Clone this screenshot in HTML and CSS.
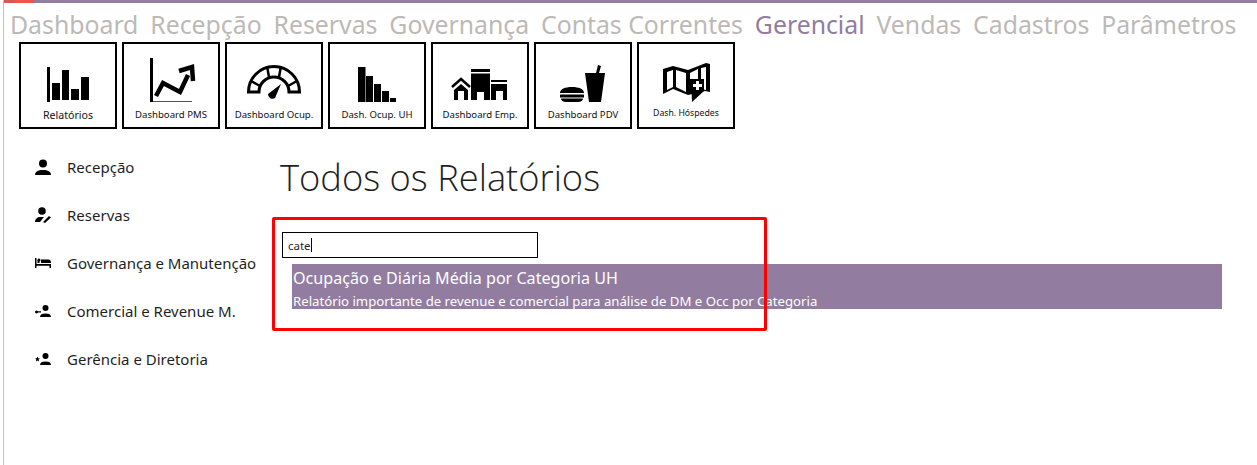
FILE: index.html
```html
<!DOCTYPE html>
<html lang="pt-BR">
<head>
<meta charset="utf-8">
<title>Todos os Relatórios</title>
<link rel="stylesheet" href="styles.css">
</head>
<body>
<div class="app">
  <div class="topbar"><div class="topbar-red"></div></div>
  <nav class="menu">
    <a>Dashboard</a><a>Recepção</a><a>Reservas</a><a>Governança</a><a>Contas Correntes</a><a class="active">Gerencial</a><a>Vendas</a><a>Cadastros</a><a>Parâmetros</a>
  </nav>
  <div class="tiles">
    <div class="tile">
      <svg class="tile-icon" viewBox="0 0 94 62"><path d="M26 23h3v35h-3zM31 39h8v17h-8zM41 26h7v30h-7zM50 45h8v11h-8zM60 33h8v23h-8z"/></svg>
      <span class="tile-label large">Relatórios</span>
    </div>
    <div class="tile">
      <svg class="tile-icon" viewBox="0 0 94 62"><path d="M26 14h3v44h-3z"/><path d="M29 57h39v1H29z" fill="#555"/><path d="M32 52l7-13 17 9 8-17" fill="none" stroke="#000" stroke-width="4.500"/><path d="M55 27l13-4 1 14" fill="none" stroke="#000" stroke-width="4.500"/></svg>
      <span class="tile-label">Dashboard PMS</span>
    </div>
    <div class="tile">
      <svg class="tile-icon" viewBox="0 0 94 62"><path d="M21.500 48A25.500 25.500 0 0 1 72.500 48H62A15 15 0 0 0 32 48Z" fill="none" stroke="#000" stroke-width="3"/><path d="M42 33l-2-11M52 33l2-11M33 42l-9-5M61 42l9-5" stroke="#000" stroke-width="2.500"/><path d="M54 40L48 54a4.500 4.500 0 0 1-7-4Z"/></svg>
      <span class="tile-label">Dashboard Ocup.</span>
    </div>
    <div class="tile">
      <svg class="tile-icon" viewBox="0 0 94 62"><path d="M28 23h7.500v35H28zM36 32h7v26h-7zM44 40h7v18h-7zM52 47h7v11h-7zM60 54h6v4h-6z"/></svg>
      <span class="tile-label">Dash. Ocup. UH</span>
    </div>
    <div class="tile">
      <svg class="tile-icon" viewBox="0 0 94 62"><path d="M19 43l9-8 9 8" fill="none" stroke="#000" stroke-width="2.500"/><path d="M21 56V46l7-6 7 6v10h-4v-9h-6v9zM38 25h19v3H38zM38 29.500h19V56h-6V48h-7v8h-6zM58 36h16v2H58zM58 40h16v16h-4v-9h-7v9h-5z"/></svg>
      <span class="tile-label">Dashboard Emp.</span>
    </div>
    <div class="tile">
      <svg class="tile-icon" viewBox="0 0 94 62"><path d="M24 49c0-4 5-6 12-6s12 2 12 6zM24 50.500h24v3H24zM25 54.500h22c0 2-2 3.500-5 3.500H30c-3 0-5-1.500-5-3.500zM49 29h11l2-8 3 1-2 7h6l-4 29H53z"/></svg>
      <span class="tile-label">Dashboard PDV</span>
    </div>
    <div class="tile">
      <svg class="tile-icon" viewBox="0 0 94 62"><path d="M24 25l10-3 15 4 18-7 4 1v28l-5-1-17 4-15-6-10 5z"/><path d="M28 28l6-2v17l-6 3zM37 26l10 3v19l-10-5zM51 29l8-4v10h-8zM62 24l5-1v23l-5-1z" fill="#fff"/><path d="M52 35h13v12L53 58z"/><path d="M57 37h3v3h3v3h-3v3h-3v-3h-3v-3h3z" fill="#fff"/></svg>
      <span class="tile-label small">Dash. Hóspedes</span>
    </div>
  </div>
  <div class="main">
    <aside class="side">
      <div class="side-item">
        <svg class="side-icon" viewBox="0 0 16 16"><circle cx="8" cy="4.500" r="4"/><path d="M0 16c0-3.500 3-5 8-5s8 1.500 8 5z"/></svg>
        <span>Recepção</span>
      </div>
      <div class="side-item">
        <svg class="side-icon" viewBox="0 0 16 16"><circle cx="7" cy="4" r="3.800"/><path d="M0 15c0-3 2-5 6-5h3l-4 5zM8 15l6-6 2 1.500-6 5.500z"/></svg>
        <span>Reservas</span>
      </div>
      <div class="side-item">
        <svg class="side-icon" viewBox="0 0 16 16"><path d="M0 3h1.500v6H16v4h-1.500v-2.200h-13V13H0zM2.500 5h2v3h-2z"/><circle cx="4" cy="5" r="1.500"/><path d="M6 4.500h7.500c1.500 0 2.500 1 2.500 3.500H6z"/></svg>
        <span>Governança e Manutenção</span>
      </div>
      <div class="side-item">
        <svg class="side-icon" viewBox="0 0 16 16"><circle cx="10.500" cy="5" r="3"/><path d="M5 14c0-2.500 2-3.500 5.500-3.500S16 11.500 16 14z"/><path d="M1.500 7.500a1.500 1.500 0 1 0 .1 0zM3 8.300h3v1.200H3z"/></svg>
        <span>Comercial e Revenue M.</span>
      </div>
      <div class="side-item">
        <svg class="side-icon" viewBox="0 0 16 16"><circle cx="10.500" cy="5" r="3"/><path d="M5 14c0-2.500 2-3.500 5.500-3.500S16 11.500 16 14z"/><path d="M2.500 5.500l.8 1.700 1.700.2-1.300 1.200.4 1.800-1.600-.9-1.600.9.400-1.800L0 7.400l1.700-.2z"/></svg>
        <span>Gerência e Diretoria</span>
      </div>
    </aside>
    <section class="content">
      <h1 class="title">Todos os Relatórios</h1>
      <div class="search"><span>cate</span><i class="caret"></i></div>
      <div class="result">
        <div class="result-title">Ocupação e Diária Média por Categoria UH</div>
        <div class="result-desc">Relatório importante de revenue e comercial para análise de DM e Occ por Categoria</div>
      </div>
    </section>
  </div>
  <div class="highlight"></div>
</div>
</body>
</html>
```

FILE: styles.css
```css
* { box-sizing: border-box; }
html, body { margin: 0; height: 100%; background: #fff; }
body {
  font-family: "Noto Sans", "Open Sans", "Liberation Sans", sans-serif;
  color: #1f1f1f;
  overflow: hidden;
}
.app {
  position: relative;
  height: 465px;
  margin-left: 3px;
  border-left: 1px solid #c4bfca;
}
.topbar {
  height: 3px;
  background: #927da0;
}
.topbar-red {
  width: 30px;
  height: 3px;
  background: linear-gradient(to right, #d9574f 0 11px, #f55050 11px);
}
.menu {
  display: flex;
  gap: 11.900px;
  height: 39px;
  padding-left: 6px;
  font-size: 24.800px;
  line-height: 43px;
  color: #bdb9b7;
  white-space: nowrap;
}
.menu .active { color: #927da0; }
.tiles {
  display: flex;
  gap: 5px;
  padding-left: 15px;
}
.tile {
  display: flex;
  flex-direction: column;
  align-items: center;
  width: 98px;
  height: 87px;
  border: 2px solid #000;
}
.tile-icon {
  display: block;
  width: 94px;
  height: 62px;
  flex: none;
}
.tile-label {
  margin-top: 2px;
  font-size: 9.600px;
  line-height: 14px;
  color: #111;
  white-space: nowrap;
}
.tile-label.large { font-size: 10.600px; }
.tile-label.small { font-size: 8.700px; margin-top: 0; line-height: 14px; }
.main {
  display: flex;
  padding-top: 14px;
}
.side {
  width: 268px;
  flex: none;
  padding-left: 31px;
}
.side-item {
  display: flex;
  align-items: center;
  gap: 16px;
  height: 48px;
  font-size: 15px;
  white-space: nowrap;
}
.side-icon {
  width: 16px;
  height: 16px;
  flex: none;
}
.content {
  flex: 1;
  min-width: 0;
  padding: 0 35px 0 10px;
}
.title {
  margin: 8px 0 0 -2px;
  font-size: 36.300px;
  line-height: 52px;
  font-weight: 300;
  font-family: "Open Sans", "Noto Sans", sans-serif;
  color: #1f1f1f;
}
.search {
  display: flex;
  align-items: center;
  width: 256px;
  height: 26px;
  margin-top: 29px;
  padding-left: 5px;
  border: 1.500px solid #000;
  font-size: 11.500px;
}
.caret {
  width: 1px;
  height: 14px;
  background: #000;
}
.result {
  height: 45px;
  margin: 6px 0 0 10px;
  padding-left: 1px;
  background: #927da0;
  color: #fff;
  white-space: nowrap;
}
.result-title {
  font-size: 16.100px;
  line-height: 28px;
}
.result-desc {
  font-size: 13.200px;
  line-height: 18px;
}
.highlight {
  position: absolute;
  left: 268px;
  top: 217px;
  width: 495px;
  height: 114px;
  border: 3px solid #f00;
  border-radius: 2px;
}
```
